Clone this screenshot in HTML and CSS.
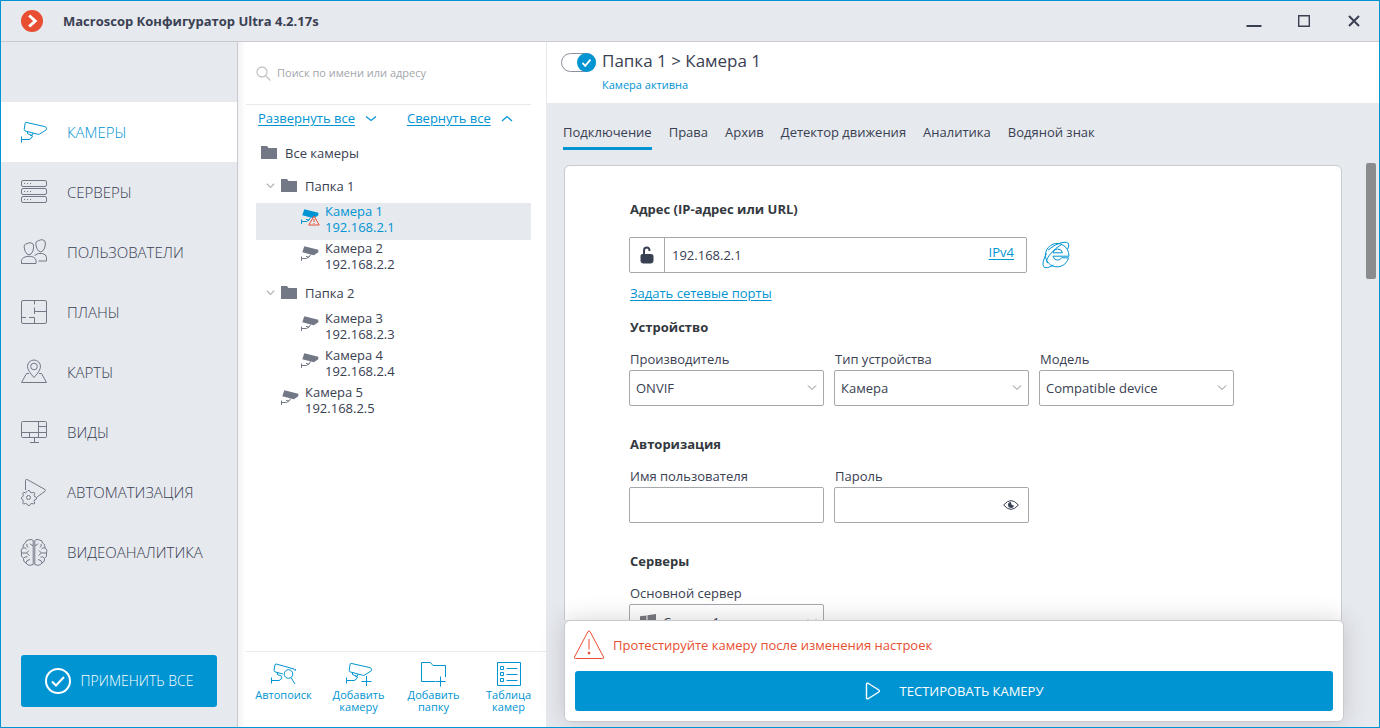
FILE: index.html
```html
<!DOCTYPE html>
<html lang="ru">
<head>
<meta charset="utf-8">
<meta name="viewport" content="width=device-width, initial-scale=1">
<title>Macroscop Конфигуратор</title>
<link rel="stylesheet" href="styles.css">
</head>
<body>
<svg class="sprite" aria-hidden="true">
  <symbol id="camera" viewBox="0 0 28 24">
    <path d="M6.2 2.4 24.8 6.6q2 .8 1.700 1.700l-.2 1.500-6.600 4.200q-.6.6-2.200.2L4.800 10.800q-.7-.3-.6-1.200L5.200 3q.3-.8 1-.6ZM7.500 11.700v1.800l4.500 1.900 1-2.200M10 15l2.500.9q-.8 3.100-3.500 3.600H1.500M1.500 16.500v6"/>
  </symbol>
  <symbol id="camera-solid" viewBox="0 0 18 15">
    <path class="solid" d="M3.300.2 17.300 3.800v2.400l-4.500 3L1.300 6.200Z"/>
    <path d="M9.500 8.500 8 11.200l-3-.8M8 11 5.500 12.500H.5M.5 10.500V15"/>
  </symbol>
  <symbol id="folder" viewBox="0 0 16 13">
    <path d="M0 0h6l1.500 2H16v11H0Z"/>
  </symbol>
  <symbol id="chevron" viewBox="0 0 10 6">
    <path d="M1 .5 5 4.500 9 .5"/>
  </symbol>
</svg>

<div class="window">
  <header class="titlebar">
    <svg class="logo" viewBox="0 0 22 22" aria-hidden="true"><circle cx="11" cy="11" r="11"/><path d="m8.200 5.500 6 5.500-6 5.500"/></svg>
    <h1 class="title">Macroscop Конфигуратор Ultra 4.2.17s</h1>
    <div class="window-controls">
      <button type="button" aria-label="Свернуть"><svg viewBox="0 0 16 14"><path d="M.5 12h15"/></svg></button>
      <button type="button" aria-label="Развернуть"><svg viewBox="0 0 16 14"><path class="thin" d="M2.700 1.700h10.600v10.600H2.700Z"/></svg></button>
      <button type="button" aria-label="Закрыть"><svg viewBox="0 0 16 14"><path d="m3 2 10 10M13 2 3 12"/></svg></button>
    </div>
  </header>

  <div class="workspace">
    <aside class="sidebar">
      <nav class="nav" aria-label="Разделы">
        <a class="nav-item active" href="#cameras"><svg class="nav-icon" viewBox="0 0 28 24"><use href="#camera"/></svg>КАМЕРЫ</a>
        <a class="nav-item" href="#servers"><svg class="nav-icon" viewBox="0 0 28 26"><rect x="1.500" y="1.500" width="25" height="6" rx="1.500"/><rect x="1.500" y="9.500" width="25" height="6" rx="1.500"/><rect x="1.500" y="17.500" width="25" height="6" rx="1.500"/><path stroke-dasharray="1 2" d="M4 4.500h8M4 12.500h8M4 20.500h8"/></svg>СЕРВЕРЫ</a>
        <a class="nav-item" href="#users"><svg class="nav-icon" viewBox="0 0 28 26"><path d="M4.300 9Q3.500 5 7 4.700q1.500-1.200 4-.9 3 .4 2.700 4.200-.2 4.500-2.700 7-2 1.800-4 0-2.500-2.500-2.700-6ZM16 6q-.8-4 2.700-4.300 1.500-1.200 4-.9 3 .4 2.700 4.200-.2 4.500-2.700 7-2 1.800-4 0Q16.200 9.500 16 6ZM1.500 24.500v-3q1-4 7.500-4.200 6 0 7 4.200v3ZM14.500 16.500q3.500-3 8-2 4 1 4 4v3.500h-8"/></svg>ПОЛЬЗОВАТЕЛИ</a>
        <a class="nav-item" href="#plans"><svg class="nav-icon" viewBox="0 0 28 26"><rect x="1.500" y="1.500" width="25" height="23" rx="1.500"/><path d="M14.500 2v3.500M14.500 8.500v6.500M14.500 12.500h12M2 18.500h4M9 18.500h5.500v6"/></svg>ПЛАНЫ</a>
        <a class="nav-item" href="#maps"><svg class="nav-icon" viewBox="0 0 28 26"><path d="M14 18.500Q7.500 11.500 7.500 7.500A6.500 6.500 0 0 1 20.500 7.500Q20.500 11.500 14 18.500Z"/><circle cx="14" cy="7.500" r="3.300"/><path d="M9 14.500H6.500L1.500 23.500h25l-5-9H19"/></svg>КАРТЫ</a>
        <a class="nav-item" href="#views"><svg class="nav-icon" viewBox="0 0 28 26"><rect x="1.500" y="2.500" width="25" height="16" rx="1"/><path d="M18.500 3v15M18.500 7.500h8M2 13.500h24.500M9.500 13.500v5M14.500 19v4.500M10 23.500h9"/></svg>ВИДЫ</a>
        <a class="nav-item" href="#automation"><svg class="nav-icon" viewBox="0 0 28 28"><path d="M5.500 12V2.500q0-1.500 2-.8L25 11.500q1 1 0 1.800L17 19"/><circle cx="8.500" cy="19.500" r="2"/><path d="m7 13.500 1-1h1.500l.8 1.800 1.700.6 1.800-.7 1 1-.7 2 .6 1.500 1.800.8V21l-1.800.8-.6 1.500.7 1.800-1 1-1.800-.7-1.700.8-.8 1.300H8l-.8-1.300-1.700-.8-1.800.7-1-1 .7-1.800-.6-1.500-1.300-.8v-1.500l1.300-.8.6-1.500-.7-2 1-1 1.800.7Z"/></svg>АВТОМАТИЗАЦИЯ</a>
        <a class="nav-item" href="#analytics"><svg class="nav-icon" viewBox="0 0 28 28"><path d="M13.200 2.500q-2-2-4.500-.5Q5.500 2 5.500 5 2.500 6 3 9.500 0 12 1.500 15q-1 3.500 2 5.500-.5 3.500 2.500 4.500 2 3.500 7.200 1.500ZM14.800 2.500q2-2 4.500-.5 3.200 0 3.200 3 3 1 2.500 4.500 3 2.500 1.500 5.500 1 3.500-2 5.500.5 3.500-2.500 4.500-2 3.500-7.200 1.500ZM13 7.500q-2 0-3-2M7 6q-1 2 1 3.500M3 10q2-1 3.500 1M1.500 15h5l2.500-2.500M6.500 15l3 2.500M3.500 20.500q1-2.500 4-1.500M6 25q0-3 4-3.500M15 7.500q2 0 3-2M21 6q1 2-1 3.500M25 10q-2-1-3.500 1M26.500 15h-5L19 12.500M21.500 15l-3 2.500M24.500 20.500q-1-2.500-4-1.500M22 25q0-3-4-3.500"/></svg>ВИДЕОАНАЛИТИКА</a>
      </nav>
      <button class="apply" type="button">
        <svg viewBox="0 0 26 26" aria-hidden="true"><circle cx="13" cy="13" r="12"/><path d="m7 13.500 4 4 8-8.500"/></svg>
        ПРИМЕНИТЬ ВСЕ
      </button>
    </aside>

    <section class="browser" aria-label="Список камер">
      <label class="search">
        <svg viewBox="0 0 15 15" aria-hidden="true"><circle cx="6" cy="6" r="5"/><path d="m9.700 9.700 4.800 4.800"/></svg>
        <input type="search" placeholder="Поиск по имени или адресу" aria-label="Поиск по имени или адресу">
      </label>
      <div class="tree-actions">
        <a href="#expand"><span>Развернуть все</span><svg viewBox="0 0 12 8"><path d="m1 1.500 5 4 5-4"/></svg></a>
        <a href="#collapse"><span>Свернуть все</span><svg viewBox="0 0 12 8"><path d="m1 6 5-4.500L11 6"/></svg></a>
      </div>
      <ul class="tree">
        <li>
          <div class="folder"><svg class="folder-icon"><use href="#folder"/></svg>Все камеры</div>
          <ul>
            <li>
              <div class="folder child"><svg class="twisty"><use href="#chevron"/></svg><svg class="folder-icon"><use href="#folder"/></svg>Папка 1</div>
              <ul>
                <li class="camera deep selected">
                  <span class="camera-mark"><svg class="camera-icon"><use href="#camera-solid"/></svg><svg class="alert" viewBox="0 0 12 11"><path d="M6 1 11.200 10H.8ZM6 4v3M6 8v1"/></svg></span>
                  <span>Камера 1<br>192.168.2.1</span>
                </li>
                <li class="camera deep"><span class="camera-mark"><svg class="camera-icon"><use href="#camera-solid"/></svg></span><span>Камера 2<br>192.168.2.2</span></li>
              </ul>
            </li>
            <li>
              <div class="folder child"><svg class="twisty"><use href="#chevron"/></svg><svg class="folder-icon"><use href="#folder"/></svg>Папка 2</div>
              <ul>
                <li class="camera deep"><span class="camera-mark"><svg class="camera-icon"><use href="#camera-solid"/></svg></span><span>Камера 3<br>192.168.2.3</span></li>
                <li class="camera deep"><span class="camera-mark"><svg class="camera-icon"><use href="#camera-solid"/></svg></span><span>Камера 4<br>192.168.2.4</span></li>
              </ul>
            </li>
            <li class="camera"><span class="camera-mark"><svg class="camera-icon"><use href="#camera-solid"/></svg></span><span>Камера 5<br>192.168.2.5</span></li>
          </ul>
        </li>
      </ul>
      <div class="toolbar">
        <button type="button"><svg viewBox="0 0 28 26"><path d="M24 9V8L6.200 3 5 3.600 4 9.500l.8 1.300 8 2.200M25.500 8l-.5 2M7.500 11.700v1.800l4.500 1.900M12 16q-.8 3-3 3.500H1.500M1.500 16.500v6M21 16.500l4 6.500"/><circle cx="18.500" cy="13" r="4.300"/></svg>Автопоиск</button>
        <button type="button"><svg viewBox="0 0 28 26"><use href="#camera" width="28" height="24"/><path d="M21.500 15v10M16.500 20.500h10"/></svg>Добавить камеру</button>
        <button type="button"><svg viewBox="0 0 28 26"><path d="M15 20.500H1.500v-19h9l2.500 3h12.500V16M20.500 15.500v10M15.500 20.500h10"/></svg>Добавить папку</button>
        <button type="button"><svg viewBox="0 0 28 26"><path d="M2.500 1.500h23v23h-23ZM5.500 5.500h3v3h-3ZM5.500 11.500h3v3h-3ZM5.500 17.500h3v3h-3ZM11.500 7.500h11M11.500 13.500h11M11.500 19.500h11"/></svg>Таблица камер</button>
      </div>
    </section>

    <main class="details">
      <header class="details-head">
        <label class="toggle">
          <input type="checkbox" checked aria-label="Камера активна">
          <span class="knob"><svg viewBox="0 0 20 20"><path d="m5.800 10.500 2.800 3 5.600-6.500"/></svg></span>
        </label>
        <div>
          <h2 class="crumbs">Папка 1 &gt; Камера 1</h2>
          <p class="status">Камера активна</p>
        </div>
      </header>
      <nav class="tabs" aria-label="Настройки камеры">
        <a class="current" href="#connection">Подключение</a>
        <a href="#rights">Права</a>
        <a href="#archive">Архив</a>
        <a href="#motion">Детектор движения</a>
        <a href="#analysis">Аналитика</a>
        <a href="#watermark">Водяной знак</a>
      </nav>
      <div class="scroll-area">
        <form class="card">
          <h3><label for="address">Адрес (IP-адрес или URL)</label></h3>
          <div class="address-row">
            <div class="address">
              <span class="lock"><svg viewBox="0 0 14 18"><path class="body" d="M2 8.500h9.500q1.500 0 1.500 1.500v5q0 2-2 2H3q-2 0-2-2v-5q0-1.500 1-1.500Z"/><path class="shackle" d="M4 9V4.500Q4 1.500 6.800 1.500T9.500 5"/></svg></span>
              <input id="address" type="text" value="192.168.2.1">
              <a href="#ipv4">IPv4</a>
            </div>
            <button class="browse" type="button" aria-label="Открыть в браузере">
              <svg viewBox="0 0 28 28"><path d="M26.500 16.800A11.700 11.700 0 1 1 26.500 11.500l.5 3.700H11q.8 3.900 4.700 3.900 2.600 0 3.700-2.300h7.100ZM11 11.800h9.500Q19.800 8 15.700 8T11 11.800ZM4.500 12.500Q-.5 22 1.500 25.500q2.500 3 10-1.500M6 9Q13 3 20 1.500q5-1 6.500 1 1 2-1 6M6 22Q2.500 21 7.500 14 14 6 20 3.300"/></svg>
            </button>
          </div>
          <a class="ports" href="#ports">Задать сетевые порты</a>

          <h3>Устройство</h3>
          <div class="fields">
            <div class="field"><label for="vendor">Производитель</label><div class="control"><select id="vendor"><option>ONVIF</option></select><svg><use href="#chevron"/></svg></div></div>
            <div class="field"><label for="kind">Тип устройства</label><div class="control"><select id="kind"><option>Камера</option></select><svg><use href="#chevron"/></svg></div></div>
            <div class="field"><label for="model">Модель</label><div class="control"><select id="model"><option>Compatible device</option></select><svg><use href="#chevron"/></svg></div></div>
          </div>

          <h3>Авторизация</h3>
          <div class="fields">
            <div class="field"><label for="user">Имя пользователя</label><div class="control"><input id="user" type="text"></div></div>
            <div class="field"><label for="password">Пароль</label><div class="control"><input id="password" type="password"><button class="reveal" type="button" aria-label="Показать пароль"><svg viewBox="0 0 16 10"><path d="M.6 5Q8-3.800 15.400 5 8 13.800.6 5Z"/><path class="pupil" d="M8 2a3 3 0 1 0 3 3.500Q8 5.500 8 2Z"/></svg></button></div></div>
          </div>

          <h3>Серверы</h3>
          <div class="fields">
            <div class="field"><label for="server">Основной сервер</label><div class="control with-icon"><span class="os"><svg viewBox="0 0 16 16"><path d="M0 2.300 6.500 1.400v6.200H0ZM7.500 1.200 16 0v7.600H7.500ZM0 8.500h6.500v6.200L0 13.800ZM7.500 8.500H16V16l-8.500-1.200Z"/></svg></span><select id="server"><option>Сервер 1</option></select><svg><use href="#chevron"/></svg></div></div>
          </div>
        </form>
        <div class="scrollbar" aria-hidden="true"></div>
      </div>
      <footer class="test-bar">
        <p class="notice"><svg viewBox="0 0 32 30" aria-hidden="true"><path d="M15 1.500q1-1 2 0L30.500 27q.5 1.500-1 1.500h-27q-1.500 0-1-1.500ZM16 9v10.500"/><circle cx="16" cy="23" r="1"/></svg>Протестируйте камеру после изменения настроек</p>
        <button class="test" type="button"><svg viewBox="0 0 16 18" aria-hidden="true"><path d="M1.500 2.500q0-2 2-1L13.800 8q1.200 1 0 2L3.500 16.500q-2 1-2-1Z"/></svg>ТЕСТИРОВАТЬ КАМЕРУ</button>
      </footer>
    </main>
  </div>
</div>
</body>
</html>
```
FILE: styles.css
```css
:root {
  --blue: #0094d2;
  --surface: #e6e9ee;
  --line: #c8cacf;
  --ink: #394052;
  --slate: #727886;
  --red: #e84e31;
}

* { box-sizing: border-box; }

body {
  margin: 0;
  color: var(--ink);
  font: 13px/20px "Open Sans", "Noto Sans", sans-serif;
}

h1, h2, h3, p, ul { margin: 0; padding: 0; }
ul { list-style: none; }
a { color: var(--blue); text-decoration: none; }
svg { display: block; flex: none; fill: none; stroke: currentColor; }
button, input, select { color: inherit; font: inherit; }
button { padding: 0; border: 0; background: none; cursor: pointer; }
.sprite { position: absolute; width: 0; height: 0; }

.window {
  display: flex;
  flex-direction: column;
  height: 100vh;
  border: 1px solid var(--blue);
  background: #fff;
  overflow: hidden;
}

/* Title bar */
.titlebar {
  display: flex;
  flex: none;
  align-items: center;
  height: 41px;
  padding: 0 17px 1px 20px;
  border-bottom: 1px solid var(--line);
  background: var(--surface);
}
.logo { width: 22px; height: 22px; margin-right: 20px; stroke: #fff; stroke-width: 3; }
.logo circle { fill: var(--red); stroke: none; }
.title { font-size: 13px; line-height: 20px; }
.window-controls { display: flex; gap: 34px; margin-left: auto; }
.window-controls svg { width: 16px; height: 14px; stroke-width: 2; }
.window-controls .thin { stroke-width: 1.4; }

.workspace { display: flex; flex: 1; min-height: 0; }

/* Sections */
.sidebar {
  display: flex;
  flex: none;
  flex-direction: column;
  justify-content: space-between;
  width: 237px;
  padding: 60px 0 20px;
  border-right: 1px solid var(--line);
  background: var(--surface);
}
.nav-item {
  display: flex;
  align-items: center;
  gap: 19px;
  height: 60px;
  padding-left: 19px;
  color: var(--ink);
  font-size: 15px;
  font-weight: 300;
}
.nav-icon { width: 28px; height: 28px; color: var(--slate); }
.nav-item.active { background: #fff; color: var(--blue); }
.active .nav-icon { color: var(--blue); }
.apply {
  display: flex;
  align-items: center;
  justify-content: center;
  gap: 10px;
  height: 52px;
  margin: 0 20px;
  border-radius: 3px;
  background: var(--blue);
  color: #fff;
  font-size: 14px;
  font-weight: 300;
}
.apply svg { width: 26px; height: 26px; stroke-width: 2; }

/* Camera browser */
.browser {
  display: flex;
  flex: none;
  flex-direction: column;
  width: 309px;
  border-right: 1px solid var(--surface);
  background: linear-gradient(90deg, #f3f3f5, #fff 8px);
}
.search {
  display: flex;
  align-items: center;
  gap: 6px;
  height: 63px;
  margin: 0 15px 0 8px;
  padding-left: 10px;
  border-bottom: 1px solid var(--surface);
  color: #c3c5c9;
}
.search svg { width: 15px; height: 15px; stroke-width: 1.3; }
.search input { flex: 1; min-width: 0; padding: 0; border: 0; outline: 0; background: none; font-size: 11px; }
.search input::placeholder { color: #a3a5aa; opacity: 1; }
.tree-actions { display: flex; gap: 30px; height: 32px; padding: 3px 0 0 20px; }
.tree-actions a { display: flex; align-items: center; gap: 10px; height: 20px; }
.tree-actions span { text-decoration: underline; text-underline-offset: 2px; }
.tree-actions svg { width: 12px; height: 8px; margin-top: 2px; stroke-width: 1.2; }
.tree { flex: 1; min-height: 0; padding: 0 15px 0 18px; overflow: hidden; }
.folder { display: flex; align-items: center; gap: 8px; height: 33px; padding: 0 0 2px 5px; }
.folder.child { padding-left: 10px; }
.folder-icon { width: 16px; height: 13px; fill: var(--slate); stroke: none; }
.twisty { width: 9px; height: 6px; margin-right: -2px; color: #b2b4b8; stroke-width: 1.4; }
.camera { display: flex; gap: 6px; height: 37px; padding-left: 25px; line-height: 16px; }
.camera.deep { padding-left: 45px; }
.camera.selected { background: var(--surface); color: var(--blue); }
.camera-mark { position: relative; width: 18px; height: 21px; padding-top: 6px; color: var(--slate); }
.selected .camera-mark { color: var(--blue); }
.camera-icon { width: 18px; height: 15px; }
.solid { fill: currentColor; stroke: none; }
.alert { position: absolute; right: -1px; bottom: -2px; width: 12px; height: 11px; color: var(--red); fill: var(--surface); }
.toolbar {
  display: flex;
  flex: none;
  height: 76px;
  margin-left: 8px;
  border-top: 1px solid var(--surface);
}
.toolbar button {
  display: flex;
  flex: 1;
  flex-direction: column;
  align-items: center;
  padding: 9px 8px 0;
  color: var(--blue);
  font-size: 11px;
  line-height: 12px;
}
.toolbar svg { width: 28px; height: 26px; margin-bottom: 2px; }

/* Camera details */
.details { display: flex; flex: 1; flex-direction: column; min-width: 0; background: var(--surface); }
.details-head { display: flex; flex: none; gap: 6px; height: 61px; padding: 9px 14px 0; background: #fff; }
.toggle { position: relative; width: 35px; height: 20px; margin-top: 2px; }
.toggle input { width: 35px; height: 19px; margin: 0; border: 1px solid #8c909a; border-radius: 10px; appearance: none; background: #fff; }
.knob { position: absolute; top: 0; right: 0; width: 19px; height: 19px; border-radius: 50%; background: var(--blue); color: #fff; }
.knob svg { stroke-width: 2; }
.crumbs { font-size: 17px; font-weight: 400; line-height: 20px; }
.status { margin-top: 6px; color: var(--blue); font-size: 11px; line-height: 16px; }
.tabs { display: flex; flex: none; gap: 17px; height: 60px; padding: 19px 16px 0; }
.tabs a { height: 28px; color: var(--ink); }
.tabs .current { border-bottom: 3px solid var(--blue); }
.scroll-area { display: flex; flex: 1; gap: 24px; min-height: 0; padding: 0 3px 0 17px; overflow: hidden; }
.card {
  flex: 1;
  align-self: flex-start;
  min-width: 0;
  margin-top: 2px;
  padding: 33px 64px 28px;
  border: 1px solid var(--line);
  border-radius: 6px;
  background: #fff;
}
.scrollbar { width: 10px; height: 116px; border-radius: 2px; background: #8b8c8e; }
.card h3 { margin-bottom: 12px; padding-left: 1px; color: #333840; font-size: 13px; line-height: 20px; }
.address-row { display: flex; align-items: center; gap: 15px; margin: 18px 0 10px; }
.address { display: flex; width: 398px; height: 36px; border: 1px solid #a6a8ac; border-radius: 2px; }
.lock { display: flex; align-items: center; justify-content: center; width: 35px; border-right: 1px solid #a6a8ac; }
.lock svg { width: 14px; height: 18px; }
.lock .body { fill: currentColor; }
.lock .shackle { stroke-width: 2; }
.address input { flex: 1; min-width: 0; padding: 0 7px; border: 0; outline: 0; background: none; }
.address a { padding: 4px 12px 0 0; text-decoration: underline; text-underline-offset: 2px; }
.browse { color: var(--blue); }
.browse svg { width: 28px; height: 28px; }
.ports { display: inline-block; margin: 0 0 14px 1px; text-decoration: underline; text-underline-offset: 2px; vertical-align: top; }
.fields { display: flex; gap: 10px; margin-bottom: 28px; }
.field { width: 195px; }
.field label { display: block; margin-bottom: 1px; padding-left: 1px; }
.control { position: relative; }
.control select, .control input {
  display: block;
  width: 100%;
  height: 36px;
  padding: 0 30px 0 6px;
  border: 1px solid #a6a8ac;
  border-radius: 2px;
  appearance: none;
  background: #fff;
}
.control > svg { position: absolute; top: 15px; right: 7px; width: 10px; height: 6px; color: #85888f; pointer-events: none; }
.reveal { position: absolute; top: 13px; right: 10px; }
.reveal svg { width: 16px; height: 10px; }
.pupil { fill: currentColor; stroke: none; }
.control.with-icon select { padding-left: 33px; }
.os { position: absolute; top: 10px; left: 11px; color: #76787d; }
.os svg { width: 16px; height: 16px; fill: currentColor; stroke: none; }

.test-bar {
  position: relative;
  display: flex;
  flex: none;
  flex-direction: column;
  margin: 0 35px 5px 17px;
  padding: 9px 8px 10px;
  border: 1px solid var(--line);
  border-radius: 6px;
  background: #fff;
  box-shadow: 0 0 24px rgba(60, 50, 60, .2);
}
.notice { display: flex; align-items: center; gap: 8px; height: 30px; color: var(--red); }
.notice svg { width: 32px; height: 30px; }
.notice circle { fill: currentColor; }
.test {
  display: flex;
  align-items: center;
  justify-content: center;
  gap: 19px;
  height: 40px;
  margin: 11px 2px 0;
  border-radius: 3px;
  background: var(--blue);
  color: #fff;
  font-size: 13px;
}
.test svg { width: 16px; height: 18px; stroke-width: 1.4; }
```
